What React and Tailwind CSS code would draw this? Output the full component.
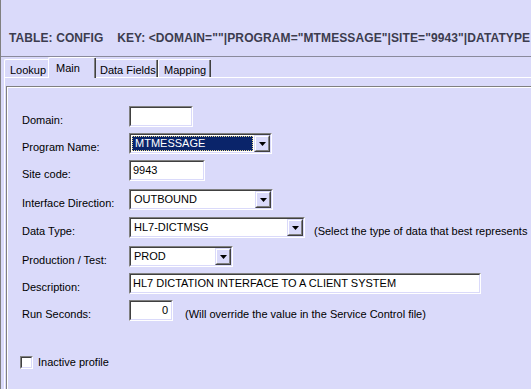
import React from "react";

const FACE = "bg-[#dadafa]";

function Sunken({ className = "", inner = "bg-white", children }) {
  return (
    <div className={`h-[21px] shrink-0 border border-t-[#808080] border-l-[#808080] border-r-white border-b-white ${className}`}>
      <div className={`flex h-full items-center border border-t-[#404040] border-l-[#404040] border-r-[#dadafa] border-b-[#dadafa] ${inner}`}>
        {children}
      </div>
    </div>
  );
}

function DropButton() {
  return (
    <div className="h-full w-[16px] shrink-0 border border-t-[#dadafa] border-l-[#dadafa] border-r-[#404040] border-b-[#404040]">
      <div className="flex h-full items-center justify-center border border-t-white border-l-white border-r-[#808080] border-b-[#808080] bg-[#dadafa]">
        <svg width="7" height="4" viewBox="0 0 7 4">
          <path d="M0 0h7L3.5 4z" fill="#000" />
        </svg>
      </div>
    </div>
  );
}

function Select({ value, className, focused }) {
  return (
    <Sunken className={className}>
      {focused ? (
        <div className="ml-[1px] mr-[1px] flex h-[15px] flex-1 items-center border border-dotted border-[#e8d890] bg-[#0a246a] pl-[2px] text-white">
          {value}
        </div>
      ) : (
        <div className="flex-1 whitespace-nowrap pl-[3px]">{value}</div>
      )}
      <DropButton />
    </Sunken>
  );
}

function Row({ label, mt, children }) {
  return (
    <div className={`flex h-[21px] items-end ${mt}`}>
      <div className="w-[107px] shrink-0 pb-[1px] leading-none">{label}</div>
      {children}
    </div>
  );
}

function Tab({ label, selected, className = "" }) {
  if (selected) {
    return (
      <div className={`relative z-10 -mb-[1px] -mx-[2px] flex h-[21px] shrink-0 items-start whitespace-nowrap rounded-t-[2px] border-t border-l border-white ${FACE} ${className}`}>
        <div className="flex h-full w-full items-start border-r border-[#404040]">
          <div className="h-full w-full border-r border-[#808080] pl-[7px] pt-[5px] leading-none">{label}</div>
        </div>
      </div>
    );
  }
  return (
    <div className={`flex h-[18px] shrink-0 items-start whitespace-nowrap rounded-t-[2px] border-t border-l border-white ${className}`}>
      <div className="h-full w-full border-r border-[#404040]">
        <div className="h-full w-full border-r border-[#808080] pl-[5px] pt-[5px] leading-none">{label}</div>
      </div>
    </div>
  );
}

export default function App() {
  return (
    <div className={`relative h-[389px] w-[531px] overflow-hidden border-l border-[#808080] ${FACE} font-['Liberation_Sans',Arial,sans-serif] text-[11px] text-black`}>
      <div className="h-[57px] border-b border-[#8a8a9c] pl-[8px] pt-[32px]">
        <div className="whitespace-nowrap text-[12px] font-bold leading-none tracking-[0.1px] text-[#3c3c4e]">
          TABLE: CONFIG&nbsp;&nbsp;&nbsp;&nbsp;KEY: &lt;DOMAIN=""|PROGRAM="MTMESSAGE"|SITE="9943"|DATATYPE
        </div>
      </div>

      <div className="flex h-[20px] items-end pl-[3px]">
        <Tab label="Lookup" className="w-[46px]" />
        <Tab label="Main" selected className="w-[48px]" />
        <Tab label="Data Fields" className="w-[64px]" />
        <Tab label="Mapping" className="w-[53px]" />
      </div>

      <div className="ml-[3px] h-full border-t border-l border-white">
        <div className="ml-[1px] mt-[8px] h-full border-t border-l border-[#808080]">
          <div className="h-full border-t border-l border-white pl-[14px]">
            <Row label="Domain:" mt="mt-[18px]">
              <Sunken className="w-[64px]" />
            </Row>
            <Row label="Program Name:" mt="mt-[6px]">
              <Select value="MTMESSAGE" focused className="w-[143px]" />
            </Row>
            <Row label="Site code:" mt="mt-[6px]">
              <Sunken className="w-[76px]">
                <span className="pl-[2px]">9943</span>
              </Sunken>
            </Row>
            <Row label="Interface Direction:" mt="mt-[8px]">
              <Select value="OUTBOUND" className="w-[144px]" />
            </Row>
            <Row label="Data Type:" mt="mt-[7px]">
              <Select value="HL7-DICTMSG" className="w-[176px]" />
              <span className="ml-[9px] whitespace-nowrap pb-[1px] leading-none">(Select the type of data that best represents</span>
            </Row>
            <Row label="Production / Test:" mt="mt-[8px]">
              <Select value="PROD" className="w-[104px]" />
            </Row>
            <Row label="Description:" mt="mt-[6px]">
              <Sunken className="w-[352px]">
                <span className="whitespace-nowrap pl-[2px]">HL7 DICTATION INTERFACE TO A CLIENT SYSTEM</span>
              </Sunken>
            </Row>
            <Row label="Run Seconds:" mt="mt-[6px]">
              <Sunken className="w-[44px]">
                <span className="w-full pr-[3px] text-right">0</span>
              </Sunken>
              <span className="ml-[12px] whitespace-nowrap pb-[1px] leading-none">(Will override the value in the Service Control file)</span>
            </Row>
            <div className="mt-[35px] flex items-center">
              <div className="-ml-[2px] h-[13px] w-[13px] border border-t-[#808080] border-l-[#808080] border-r-white border-b-white">
                <div className="h-full w-full border border-t-[#404040] border-l-[#404040] border-r-[#dadafa] border-b-[#dadafa] bg-white" />
              </div>
              <span className="ml-[5px] leading-none">Inactive profile</span>
            </div>
          </div>
        </div>
      </div>
    </div>
  );
}
